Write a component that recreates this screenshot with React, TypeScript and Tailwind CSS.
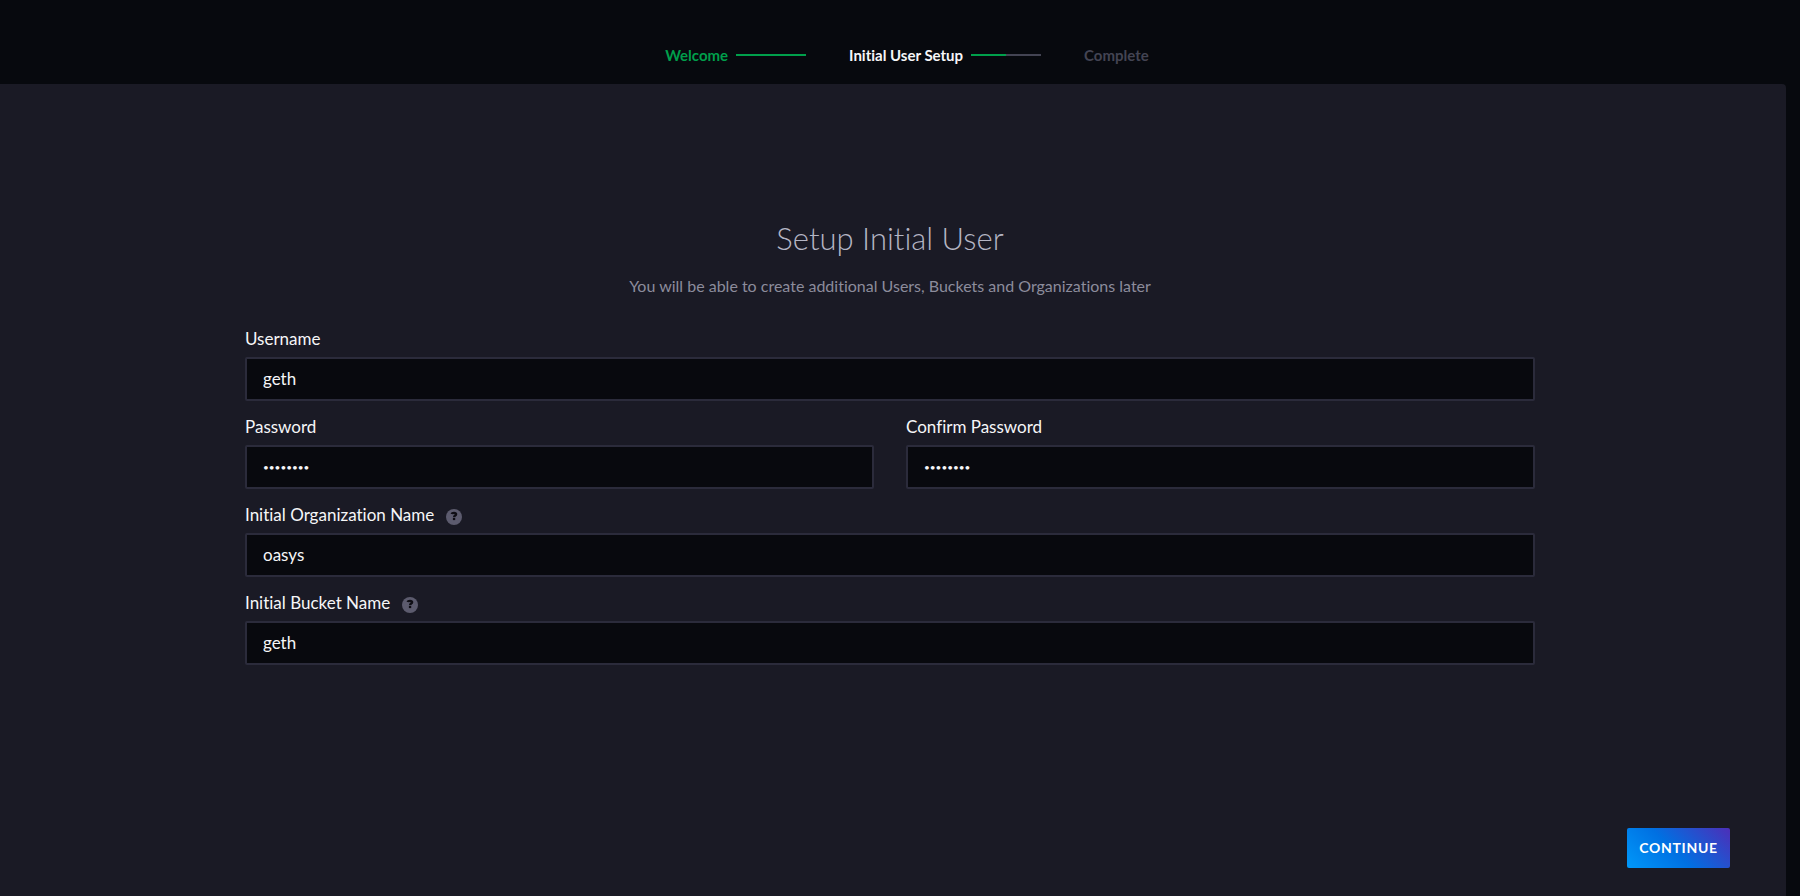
import { useId, useState } from "react";

type FieldProps = {
  label: string;
  initial: string;
  type?: "text" | "password";
  help?: string;
};

function HelpIcon() {
  return (
    <svg viewBox="0 0 16 16" className="size-4" aria-hidden="true">
      <circle cx="8" cy="8" r="8" fill="#5c5b6e" />
      <path
        d="M5.700 5.100C5.900 4.100 6.900 3.900 8 3.900c1.300 0 2.100.5 2.100 1.400 0 1.300-2 1.300-2 2.900"
        fill="none"
        stroke="#0f0e15"
        strokeWidth="2.400"
      />
      <rect x="6.900" y="9" width="2.300" height="2.100" fill="#0f0e15" />
    </svg>
  );
}

function Field({ label, initial, type = "text", help }: FieldProps) {
  const id = useId();
  const [value, setValue] = useState(initial);
  return (
    <div className="flex min-w-0 flex-1 flex-col">
      <div className="flex h-9 items-center gap-3">
        <label htmlFor={id} className="text-[17px] leading-6 text-[#f6f6f8]">
          {label}
        </label>
        {help && (
          <button type="button" aria-label={help} className="mt-1">
            <HelpIcon />
          </button>
        )}
      </div>
      <input
        id={id}
        type={type}
        value={value}
        onChange={(e) => setValue(e.target.value)}
        className={`h-11 w-full rounded-xs border-2 border-[#2b2b3b] bg-[#08090e] px-4 text-[#f6f6f8] outline-none focus:border-[#00a3ff] ${
          type === "password" ? "text-[10px]" : "pb-0.5 text-[17px]"
        }`}
      />
    </div>
  );
}

export default function App() {
  return (
    <div className="flex min-h-screen flex-col bg-[#07090e] font-['Lato',sans-serif] antialiased [font-variant-ligatures:none]">
      <nav aria-label="Setup progress" className="pt-[43px] pb-[17px]">
        <ol className="flex h-6 items-center justify-center gap-[43px] pl-3.5 text-[15px] leading-6 font-bold">
          <li className="flex items-center gap-2 text-[#009f4b]">
            Welcome
            <span className="h-0.5 w-[70px] bg-[#009f4b]" />
          </li>
          <li aria-current="step" className="flex items-center gap-2 text-[#f6f6f8]">
            Initial User Setup
            <span className="flex h-0.5 w-[70px] bg-[#434453]">
              <span className="w-1/2 bg-[#009f4b]" />
            </span>
          </li>
          <li className="text-[#434453]">Complete</li>
        </ol>
      </nav>
      <main className="mr-3.5 flex flex-1 flex-col rounded-tr-sm bg-[#1a1a25] px-14 pb-7">
        <form
          className="flex flex-1 flex-col"
          onSubmit={(e) => e.preventDefault()}
        >
          <div className="mr-[195px] ml-[189px] flex flex-col pt-[131px]">
            <h1 className="text-center text-[31px] leading-[46px] font-light text-[#b4b5c4]">
              Setup Initial User
            </h1>
            <p className="mt-[13px] mb-[23px] text-center text-base leading-6 text-[#8c8c9c]">
              You will be able to create additional Users, Buckets and
              Organizations later
            </p>
            <div className="flex flex-col gap-2">
              <Field label="Username" initial="geth" />
              <div className="flex gap-8">
                <Field label="Password" initial="password" type="password" />
                <Field label="Confirm Password" initial="password" type="password" />
              </div>
              <Field
                label="Initial Organization Name"
                initial="oasys"
                help="About organizations"
              />
              <Field
                label="Initial Bucket Name"
                initial="geth"
                help="About buckets"
              />
            </div>
          </div>
          <button
            type="submit"
            className="mt-auto h-10 w-[103px] self-end rounded-xs bg-linear-45/srgb from-[#0098f9] via-[#0070e2] via-45% to-[#4d2eb8] text-sm font-bold tracking-wider text-white"
          >
            CONTINUE
          </button>
        </form>
      </main>
    </div>
  );
}
